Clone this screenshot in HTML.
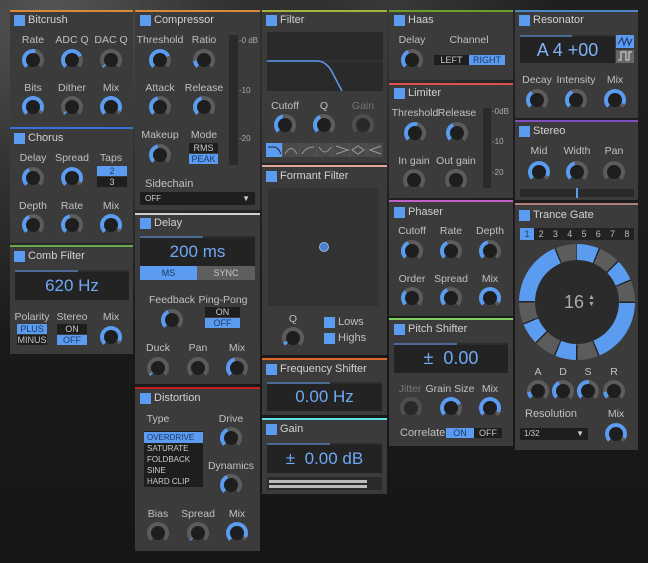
<!DOCTYPE html>
<html><head><meta charset="utf-8"><style>
*{box-sizing:border-box;margin:0;padding:0}
body{width:648px;height:563px;overflow:hidden;background:#1d1d1d;font-family:"Liberation Sans",sans-serif;font-size:10.5px;color:#c4c4c4;position:relative}
.bg{position:absolute;inset:0;background:radial-gradient(ellipse at 8% 3%,#555 0,#333 20%,transparent 42%),radial-gradient(ellipse at 60% 0%,#3a3a3a 0,transparent 30%),linear-gradient(#1f1f1f,#161616)}
.p{position:absolute;background:#3b3b3b;border-top:2px solid}
.cb{position:absolute;width:11px;height:11px;background:#5b9bf0}
.t{position:absolute;font-size:11px;color:#d2d2d2;white-space:nowrap}
.l{position:absolute;transform:translateX(-50%);white-space:nowrap;color:#c0c0c0}
.k{position:absolute;width:22px;height:22px;margin:-11px 0 0 -11px;border-radius:50%;background:conic-gradient(from 225deg,#5b9bf0 0 var(--a),#5c5c5c 0 270deg,transparent 0)}
.k::after{content:"";position:absolute;left:4px;top:4px;width:14px;height:14px;border-radius:50%;background:#1e1e1e}
.d{position:absolute;background:#232323;color:#6fa8f5;text-align:center;border-top:2px solid #2c2c2c}
.d::before{content:"";position:absolute;left:0;top:-2px;width:55%;height:2px;background:#4b6a93}
.b{position:absolute;text-align:center;font-size:9px;line-height:10px;background:#1e1e1e;color:#c8c8c8}
.on{background:#5b9bf0;color:#1e3a66}
.m{position:absolute;background:#2a2a2a}
.s{position:absolute;font-size:8px;color:#aaa}
</style></head><body>
<div class="bg"></div>

<!-- Bitcrush -->
<div class="p" style="left:10px;top:10px;width:123px;height:115px;border-color:#d8893a"></div>
<div class="cb" style="left:14px;top:15px"></div><div class="t" style="left:28px;top:14px">Bitcrush</div>
<div class="l" style="left:33px;top:34px">Rate</div><div class="l" style="left:72px;top:34px">ADC Q</div><div class="l" style="left:111px;top:34px">DAC Q</div>
<div class="k" style="left:33px;top:60px;--a:150deg"></div><div class="k" style="left:72px;top:60px;--a:200deg"></div><div class="k" style="left:111px;top:60px;--a:10deg"></div>
<div class="l" style="left:33px;top:82px">Bits</div><div class="l" style="left:72px;top:82px">Dither</div><div class="l" style="left:111px;top:82px">Mix</div>
<div class="k" style="left:33px;top:107px;--a:250deg"></div><div class="k" style="left:72px;top:107px;--a:10deg"></div><div class="k" style="left:111px;top:107px;--a:250deg"></div>

<!-- Chorus -->
<div class="p" style="left:10px;top:127px;width:123px;height:116px;border-color:#3b6fd6"></div>
<div class="cb" style="left:14px;top:133px"></div><div class="t" style="left:28px;top:132px">Chorus</div>
<div class="l" style="left:33px;top:152px">Delay</div><div class="l" style="left:72px;top:152px">Spread</div><div class="l" style="left:111px;top:152px">Taps</div>
<div class="k" style="left:33px;top:178px;--a:110deg"></div><div class="k" style="left:72px;top:178px;--a:250deg"></div>
<div class="b on" style="left:97px;top:166px;width:30px">2</div><div class="b" style="left:97px;top:177px;width:30px">3</div>
<div class="l" style="left:33px;top:200px">Depth</div><div class="l" style="left:72px;top:200px">Rate</div><div class="l" style="left:111px;top:200px">Mix</div>
<div class="k" style="left:33px;top:225px;--a:110deg"></div><div class="k" style="left:72px;top:225px;--a:120deg"></div><div class="k" style="left:111px;top:225px;--a:250deg"></div>

<!-- Comb -->
<div class="p" style="left:10px;top:245px;width:123px;height:109px;border-color:#6bab4a"></div>
<div class="cb" style="left:14px;top:251px"></div><div class="t" style="left:28px;top:250px">Comb Filter</div>
<div class="d" style="left:15px;top:270px;width:114px;height:30px;font-size:17px;line-height:27px">620 Hz</div>
<div class="l" style="left:32px;top:311px">Polarity</div><div class="l" style="left:72px;top:311px">Stereo</div><div class="l" style="left:111px;top:311px">Mix</div>
<div class="b on" style="left:17px;top:324px;width:30px">PLUS</div><div class="b" style="left:17px;top:335px;width:30px">MINUS</div>
<div class="b" style="left:57px;top:324px;width:30px">ON</div><div class="b on" style="left:57px;top:335px;width:30px">OFF</div>
<div class="k" style="left:111px;top:337px;--a:250deg"></div>

<!-- Compressor -->
<div class="p" style="left:135px;top:10px;width:125px;height:200px;border-color:#d8893a"></div>
<div class="cb" style="left:140px;top:15px"></div><div class="t" style="left:154px;top:14px">Compressor</div>
<div class="l" style="left:160px;top:34px">Threshold</div><div class="l" style="left:204px;top:34px">Ratio</div>
<div class="k" style="left:160px;top:60px;--a:200deg"></div><div class="k" style="left:204px;top:60px;--a:40deg"></div>
<div class="l" style="left:160px;top:82px">Attack</div><div class="l" style="left:204px;top:82px">Release</div>
<div class="k" style="left:160px;top:107px;--a:120deg"></div><div class="k" style="left:204px;top:107px;--a:120deg"></div>
<div class="l" style="left:160px;top:129px">Makeup</div><div class="l" style="left:204px;top:129px">Mode</div>
<div class="k" style="left:160px;top:155px;--a:120deg"></div>
<div class="b" style="left:189px;top:143px;width:29px">RMS</div><div class="b on" style="left:189px;top:154px;width:29px">PEAK</div>
<div class="m" style="left:229px;top:35px;width:9px;height:130px"></div>
<div class="s" style="left:239px;top:36px">-0 dB</div><div class="s" style="left:239px;top:86px">-10</div><div class="s" style="left:239px;top:134px">-20</div>
<div class="t" style="left:145px;top:178px;color:#c0c0c0">Sidechain</div>
<div class="m" style="left:140px;top:192px;width:115px;height:13px;background:#1e1e1e;font-size:8px;padding:2px 5px;color:#ccc">OFF<span style="float:right">▼</span></div>

<!-- Delay -->
<div class="p" style="left:135px;top:213px;width:125px;height:171px;border-color:#cfcfcf"></div>
<div class="cb" style="left:140px;top:218px"></div><div class="t" style="left:154px;top:217px">Delay</div>
<div class="d" style="left:140px;top:236px;width:115px;height:30px;font-size:17px;line-height:27px">200 ms</div>
<div class="b on" style="left:140px;top:266px;width:57px;height:14px;line-height:14px">MS</div><div class="b" style="left:197px;top:266px;width:58px;height:14px;line-height:14px;background:#5e5e5e">SYNC</div>
<div class="l" style="left:172px;top:294px">Feedback</div><div class="l" style="left:223px;top:294px">Ping-Pong</div>
<div class="k" style="left:172px;top:320px;--a:110deg"></div>
<div class="b" style="left:205px;top:307px;width:35px">ON</div><div class="b on" style="left:205px;top:318px;width:35px">OFF</div>
<div class="l" style="left:158px;top:342px">Duck</div><div class="l" style="left:198px;top:342px">Pan</div><div class="l" style="left:237px;top:342px">Mix</div>
<div class="k" style="left:158px;top:368px;--a:10deg"></div><div class="k" style="left:198px;top:368px;--a:0deg"></div><div class="k" style="left:237px;top:368px;--a:120deg"></div>

<!-- Distortion -->
<div class="p" style="left:135px;top:387px;width:125px;height:164px;border-color:#c42020"></div>
<div class="cb" style="left:140px;top:393px"></div><div class="t" style="left:154px;top:392px">Distortion</div>
<div class="l" style="left:158px;top:413px">Type</div><div class="l" style="left:231px;top:413px">Drive</div>
<div class="m" style="left:144px;top:431px;width:59px;height:56px;background:#1e1e1e"></div>
<div class="b on" style="left:144px;top:432px;width:59px;text-align:left;padding-left:3px;font-size:8px;height:11px;line-height:11px">OVERDRIVE</div>
<div class="s" style="left:147px;top:444px;color:#ccc">SATURATE</div><div class="s" style="left:147px;top:455px;color:#ccc">FOLDBACK</div><div class="s" style="left:147px;top:466px;color:#ccc">SINE</div><div class="s" style="left:147px;top:477px;color:#ccc">HARD CLIP</div>
<div class="k" style="left:231px;top:438px;--a:110deg"></div>
<div class="l" style="left:231px;top:460px">Dynamics</div>
<div class="k" style="left:231px;top:485px;--a:110deg"></div>
<div class="l" style="left:158px;top:508px">Bias</div><div class="l" style="left:198px;top:508px">Spread</div><div class="l" style="left:237px;top:508px">Mix</div>
<div class="k" style="left:158px;top:533px;--a:0deg"></div><div class="k" style="left:198px;top:533px;--a:5deg"></div><div class="k" style="left:237px;top:533px;--a:250deg"></div>

<!-- Filter -->
<div class="p" style="left:262px;top:10px;width:125px;height:153px;border-color:#a7b33a"></div>
<div class="cb" style="left:266px;top:15px"></div><div class="t" style="left:280px;top:14px">Filter</div>
<div class="m" style="left:267px;top:32px;width:116px;height:59px"></div>
<svg style="position:absolute;left:267px;top:32px" width="116" height="59"><line x1="0" y1="29" x2="116" y2="29" stroke="#3a3a3a"/><path d="M0 29 H50 Q58 29 64 38 L75 59" stroke="#5b9bf0" stroke-width="1.5" fill="none"/></svg>
<div class="l" style="left:285px;top:100px">Cutoff</div><div class="l" style="left:324px;top:100px">Q</div><div class="l" style="left:363px;top:100px;color:#777">Gain</div>
<div class="k" style="left:285px;top:125px;--a:120deg"></div><div class="k" style="left:324px;top:125px;--a:110deg"></div><div class="k" style="left:363px;top:125px;--a:0deg;opacity:.6"></div>
<div style="position:absolute;left:266px;top:143px;width:117px;height:14px;background:#555;display:flex;gap:1px">
<div style="flex:1;background:#5b9bf0"></div><div style="flex:1;background:#4a4a4a"></div><div style="flex:1;background:#4a4a4a"></div><div style="flex:1;background:#4a4a4a"></div><div style="flex:1;background:#4a4a4a"></div><div style="flex:1;background:#4a4a4a"></div><div style="flex:1;background:#4a4a4a"></div></div>
<svg style="position:absolute;left:266px;top:143px" width="117" height="14" fill="none" stroke="#9a9a9a" stroke-width="1"><path d="M2 4 H8 Q12 4 15 11" stroke="#223"/><path d="M19 11 Q25 0 31 11"/><path d="M36 11 Q40 4 48 4"/><path d="M53 4 Q59 14 65 4"/><path d="M70 3 L82 7 L70 11"/><path d="M86 7 L92 3 L98 7 L92 11 Z"/><path d="M115 3 L104 7 L115 11"/></svg>

<!-- Formant -->
<div class="p" style="left:262px;top:165px;width:125px;height:190px;border-color:#e0a69a"></div>
<div class="cb" style="left:266px;top:171px"></div><div class="t" style="left:280px;top:170px">Formant Filter</div>
<div class="m" style="left:268px;top:188px;width:111px;height:118px;background:#333"></div>
<div style="position:absolute;left:319px;top:242px;width:10px;height:10px;border-radius:50%;background:#4b7fd0;border:1px solid #9bc"></div>
<div class="l" style="left:293px;top:313px">Q</div>
<div class="k" style="left:293px;top:338px;--a:20deg"></div>
<div class="cb" style="left:324px;top:317px"></div><div class="t" style="left:338px;top:316px;color:#c0c0c0">Lows</div>
<div class="cb" style="left:324px;top:333px"></div><div class="t" style="left:338px;top:332px;color:#c0c0c0">Highs</div>

<!-- Freq shifter -->
<div class="p" style="left:262px;top:358px;width:125px;height:57px;border-color:#e0692a"></div>
<div class="cb" style="left:266px;top:364px"></div><div class="t" style="left:280px;top:363px">Frequency Shifter</div>
<div class="d" style="left:267px;top:382px;width:115px;height:29px;font-size:17px;line-height:26px">0.00 Hz</div>

<!-- Gain -->
<div class="p" style="left:262px;top:418px;width:125px;height:76px;border-color:#5fe0e6"></div>
<div class="cb" style="left:266px;top:424px"></div><div class="t" style="left:280px;top:423px">Gain</div>
<div class="d" style="left:267px;top:443px;width:115px;height:30px;font-size:17px;line-height:27px">±&nbsp; 0.00 dB</div>
<div class="m" style="left:267px;top:477px;width:115px;height:13px"></div>
<div style="position:absolute;left:269px;top:480px;width:98px;height:3px;background:#bbb"></div><div style="position:absolute;left:269px;top:485px;width:98px;height:3px;background:#bbb"></div>

<!-- Haas -->
<div class="p" style="left:389px;top:10px;width:124px;height:70px;border-color:#6f9c2a"></div>
<div class="cb" style="left:394px;top:15px"></div><div class="t" style="left:408px;top:14px">Haas</div>
<div class="l" style="left:412px;top:34px">Delay</div><div class="l" style="left:469px;top:34px">Channel</div>
<div class="k" style="left:412px;top:60px;--a:110deg"></div>
<div class="b" style="left:434px;top:55px;width:35px">LEFT</div><div class="b on" style="left:469px;top:55px;width:36px">RIGHT</div>

<!-- Limiter -->
<div class="p" style="left:389px;top:83px;width:124px;height:115px;border-color:#e05050"></div>
<div class="cb" style="left:394px;top:88px"></div><div class="t" style="left:408px;top:87px">Limiter</div>
<div class="l" style="left:415px;top:107px">Threshold</div><div class="l" style="left:457px;top:107px">Release</div>
<div class="k" style="left:415px;top:133px;--a:150deg"></div><div class="k" style="left:457px;top:133px;--a:110deg"></div>
<div class="l" style="left:414px;top:155px">In gain</div><div class="l" style="left:456px;top:155px">Out gain</div>
<div class="k" style="left:414px;top:180px;--a:0deg"></div><div class="k" style="left:456px;top:180px;--a:0deg"></div>
<div class="m" style="left:483px;top:108px;width:8px;height:80px"></div>
<div class="s" style="left:492px;top:107px">-0dB</div><div class="s" style="left:492px;top:137px">-10</div><div class="s" style="left:492px;top:168px">-20</div>

<!-- Phaser -->
<div class="p" style="left:389px;top:200px;width:124px;height:116px;border-color:#c060c8"></div>
<div class="cb" style="left:394px;top:207px"></div><div class="t" style="left:408px;top:206px">Phaser</div>
<div class="l" style="left:412px;top:225px">Cutoff</div><div class="l" style="left:451px;top:225px">Rate</div><div class="l" style="left:490px;top:225px">Depth</div>
<div class="k" style="left:412px;top:251px;--a:110deg"></div><div class="k" style="left:451px;top:251px;--a:110deg"></div><div class="k" style="left:490px;top:251px;--a:120deg"></div>
<div class="l" style="left:412px;top:273px">Order</div><div class="l" style="left:451px;top:273px">Spread</div><div class="l" style="left:490px;top:273px">Mix</div>
<div class="k" style="left:412px;top:298px;--a:90deg"></div><div class="k" style="left:451px;top:298px;--a:110deg"></div><div class="k" style="left:490px;top:298px;--a:250deg"></div>

<!-- Pitch -->
<div class="p" style="left:389px;top:318px;width:124px;height:128px;border-color:#7fd05a"></div>
<div class="cb" style="left:394px;top:324px"></div><div class="t" style="left:408px;top:323px">Pitch Shifter</div>
<div class="d" style="left:394px;top:343px;width:114px;height:30px;font-size:18px;line-height:27px">±&nbsp; 0.00</div>
<div class="l" style="left:410px;top:383px;color:#777">Jitter</div><div class="l" style="left:450px;top:383px">Grain Size</div><div class="l" style="left:490px;top:383px">Mix</div>
<div class="k" style="left:411px;top:408px;--a:0deg;opacity:.6"></div><div class="k" style="left:451px;top:408px;--a:200deg"></div><div class="k" style="left:490px;top:408px;--a:250deg"></div>
<div class="t" style="left:400px;top:427px;color:#c0c0c0">Correlate</div>
<div class="b on" style="left:446px;top:428px;width:28px">ON</div><div class="b" style="left:474px;top:428px;width:28px">OFF</div>

<!-- Resonator -->
<div class="p" style="left:515px;top:10px;width:123px;height:108px;border-color:#4f86c8"></div>
<div class="cb" style="left:519px;top:15px"></div><div class="t" style="left:533px;top:14px">Resonator</div>
<div class="d" style="left:520px;top:35px;width:95px;height:28px;font-size:18px;line-height:26px;color:#7fb2f5">A 4 +00</div>
<div class="b on" style="left:616px;top:35px;width:18px;height:13px"></div><div class="b" style="left:616px;top:50px;width:18px;height:13px;background:#666"></div>
<svg style="position:absolute;left:616px;top:35px" width="18" height="28" fill="none" stroke-width="1.2"><path d="M2 9 L6 3 L8 10 L11 3 L13 10 L16 4" stroke="#1d3d70"/><path d="M2 25 H5 V17 H10 V25 H13 V17 H16" stroke="#ccc"/></svg>
<div class="l" style="left:537px;top:74px">Decay</div><div class="l" style="left:576px;top:74px">Intensity</div><div class="l" style="left:615px;top:74px">Mix</div>
<div class="k" style="left:537px;top:100px;--a:100deg"></div><div class="k" style="left:576px;top:100px;--a:110deg"></div><div class="k" style="left:615px;top:100px;--a:250deg"></div>

<!-- Stereo -->
<div class="p" style="left:515px;top:120px;width:123px;height:80px;border-color:#8050c0"></div>
<div class="cb" style="left:519px;top:126px"></div><div class="t" style="left:533px;top:125px">Stereo</div>
<div class="l" style="left:539px;top:145px">Mid</div><div class="l" style="left:577px;top:145px">Width</div><div class="l" style="left:614px;top:145px">Pan</div>
<div class="k" style="left:539px;top:172px;--a:250deg"></div><div class="k" style="left:577px;top:172px;--a:120deg"></div><div class="k" style="left:614px;top:172px;--a:0deg"></div>
<div class="m" style="left:520px;top:189px;width:114px;height:8px"></div><div style="position:absolute;left:576px;top:188px;width:2px;height:10px;background:#5b9bf0"></div>

<!-- Trance Gate -->
<div class="p" style="left:515px;top:203px;width:123px;height:247px;border-color:#b08080"></div>
<div class="cb" style="left:519px;top:210px"></div><div class="t" style="left:533px;top:209px">Trance Gate</div>
<div style="position:absolute;left:520px;top:228px;width:114px;height:12px;background:#222;display:flex;font-size:9px;line-height:12px;color:#bbb;text-align:center">
<div class="on" style="width:14px">1</div><div style="flex:1">2</div><div style="flex:1">3</div><div style="flex:1">4</div><div style="flex:1">5</div><div style="flex:1">6</div><div style="flex:1">7</div><div style="flex:1">8</div></div>
<div style="position:absolute;left:519px;top:244px;width:116px;height:116px;border-radius:50%;background:conic-gradient(#5b9bf0 1deg 22deg,#222 0 23.5deg,#5c5c5c 0 44.5deg,#222 0 46deg,#5b9bf0 0 67deg,#222 0 68.5deg,#5c5c5c 0 89.5deg,#222 0 91deg,#5b9bf0 0 157deg,#222 0 158.5deg,#5c5c5c 0 179.5deg,#222 0 181deg,#5b9bf0 0 202deg,#222 0 203.5deg,#5c5c5c 0 224.5deg,#222 0 226deg,#5b9bf0 0 247deg,#222 0 248.5deg,#5c5c5c 0 269.5deg,#222 0 271deg,#5b9bf0 0 337deg,#222 0 338.5deg,#5c5c5c 0 359.5deg,#222 0)"></div>
<div style="position:absolute;left:535px;top:260px;width:84px;height:84px;border-radius:50%;background:#2b2b2b"></div>
<div class="t" style="left:564px;top:292px;font-size:18px;color:#aaa">16</div>
<div class="t" style="left:588px;top:294px;font-size:7px;line-height:7px;color:#aaa">▲<br>▼</div>
<div class="l" style="left:538px;top:366px">A</div><div class="l" style="left:563px;top:366px">D</div><div class="l" style="left:588px;top:366px">S</div><div class="l" style="left:614px;top:366px">R</div>
<div class="k" style="left:538px;top:391px;--a:40deg"></div><div class="k" style="left:563px;top:391px;--a:110deg"></div><div class="k" style="left:588px;top:391px;--a:140deg"></div><div class="k" style="left:614px;top:391px;--a:40deg"></div>
<div class="t" style="left:525px;top:408px;color:#c0c0c0">Resolution</div><div class="l" style="left:616px;top:408px">Mix</div>
<div class="m" style="left:520px;top:428px;width:68px;height:12px;background:#1e1e1e;font-size:8px;padding:1px 4px;color:#ccc">1/32<span style="float:right">▼</span></div>
<div class="k" style="left:616px;top:434px;--a:250deg"></div>
</body></html>
